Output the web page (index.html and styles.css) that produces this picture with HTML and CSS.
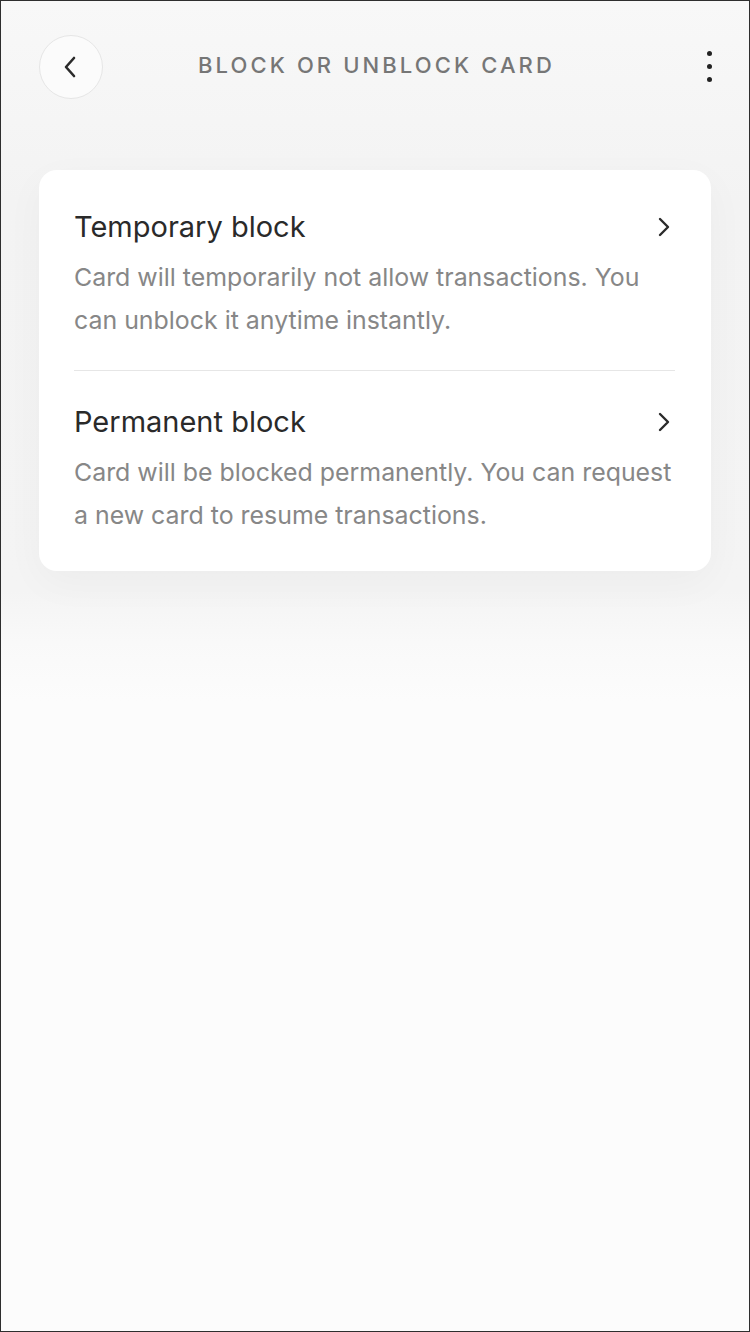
FILE: index.html
```html
<!DOCTYPE html>
<html>
<head>
<meta charset="utf-8">
<link rel="stylesheet" href="styles.css">
</head>
<body>
<div class="screen">
  <header class="header">
    <button class="back" aria-label="Back">
      <svg width="16" height="24" viewBox="0 0 16 24"><path d="M12 3 L4 12 L12 21" fill="none" stroke="#2a2a2a" stroke-width="2.6" stroke-linecap="round" stroke-linejoin="round"/></svg>
    </button>
    <h1 class="title">BLOCK OR UNBLOCK CARD</h1>
    <div class="kebab"><span></span><span></span><span></span></div>
  </header>
  <main class="content">
    <section class="card">
      <div class="item">
        <div class="item-head">
          <span class="item-title">Temporary block</span>
          <svg class="chev" width="14" height="20" viewBox="0 0 14 20"><path d="M3 2 L11 10 L3 18" fill="none" stroke="#2a2a2a" stroke-width="2.4" stroke-linecap="round" stroke-linejoin="round"/></svg>
        </div>
        <p class="item-desc">Card will temporarily not allow transactions. You can unblock it anytime instantly.</p>
      </div>
      <div class="divider"></div>
      <div class="item">
        <div class="item-head">
          <span class="item-title">Permanent block</span>
          <svg class="chev" width="14" height="20" viewBox="0 0 14 20"><path d="M3 2 L11 10 L3 18" fill="none" stroke="#2a2a2a" stroke-width="2.4" stroke-linecap="round" stroke-linejoin="round"/></svg>
        </div>
        <p class="item-desc">Card will be blocked permanently. You can request a new card to resume transactions.</p>
      </div>
    </section>
  </main>
</div>
</body>
</html>
```
FILE: styles.css
```css
* { box-sizing: border-box; }
html, body { margin: 0; padding: 0; }
body {
  font-family: "Inter", "Noto Sans", sans-serif;
  background: #fcfcfc;
}
.screen {
  width: 750px;
  height: 1332px;
  border: 1px solid #2e2e2e;
  background: linear-gradient(180deg, #f8f8f8 0px, #f3f3f3 200px, #f4f4f4 590px, #f9f9f9 640px, #fcfcfc 700px, #fcfcfc 100%);
}
.header {
  display: flex;
  align-items: center;
  padding: 33px 38px 0 38px;
  height: 98px;
}
.back {
  width: 64px;
  height: 64px;
  border-radius: 50%;
  border: 1px solid #e6e6e6;
  background: #fbfbfb;
  display: flex;
  align-items: center;
  justify-content: center;
  padding: 0;
  padding-right: 2px;
  flex: none;
}
.title {
  flex: 1;
  margin: 0 0 3px;
  text-align: center;
  font-size: 22px;
  font-weight: 500;
  letter-spacing: 3.1px;
  color: #767676;
  padding-left: 3px;
}
.kebab {
  width: 64px;
  display: flex;
  flex-direction: column;
  align-items: flex-end;
  gap: 8px;
}
.kebab span {
  width: 5px;
  height: 5px;
  border-radius: 50%;
  background: #222;
  margin-right: -1px;
}
.content {
  padding: 71px 38px 0 38px;
}
.card {
  background: #fff;
  border-radius: 18px;
  padding: 6px 36px 6px 35px;
  box-shadow: 0 12px 40px rgba(0,0,0,0.035);
}
.item {
  padding: 33px 0 28px;
}
.item-head {
  display: flex;
  align-items: center;
  justify-content: space-between;
  height: 36px;
}
.item-title {
  font-size: 29px;
  color: #2a2a2a;
  line-height: 36px;
}
.chev { margin-right: 4px; }
.item-desc {
  margin: 11px 0 0;
  font-size: 24.9px;
  line-height: 43px;
  color: #878787;
}
.divider {
  height: 1px;
  background: #e6e6e6;
}
.divider + .item { padding-top: 33px; }
```
